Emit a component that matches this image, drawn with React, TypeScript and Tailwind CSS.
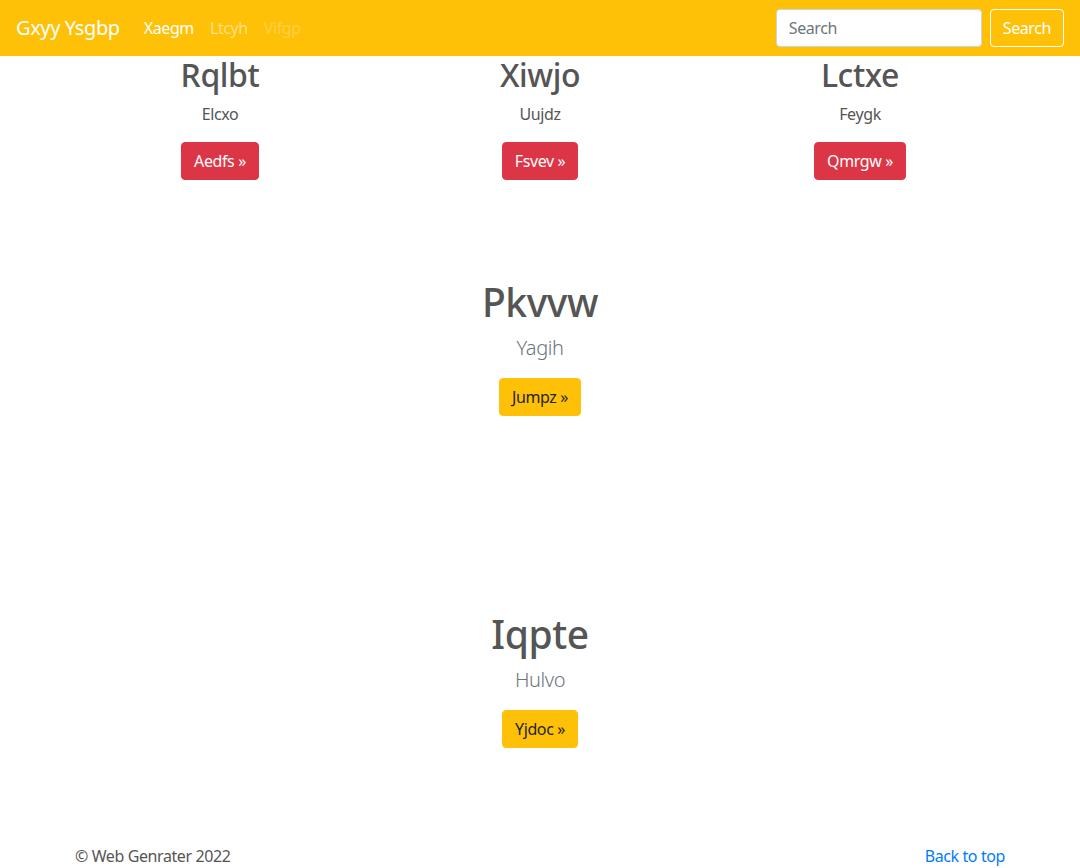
import { useState } from "react";

const font = { fontFamily: '"Noto Sans", "Open Sans", Arial, sans-serif' };

const columns = [
  { title: "Rqlbt", text: "Elcxo", btn: "Aedfs" },
  { title: "Xiwjo", text: "Uujdz", btn: "Fsvev" },
  { title: "Lctxe", text: "Feygk", btn: "Qmrgw" },
];

function Hero({ title, lead, btn, className }: { title: string; lead: string; btn: string; className: string }) {
  return (
    <section className={`text-center ${className}`}>
      <h1 className="text-[39px] leading-[47px] font-medium text-[#555] mb-2">{title}</h1>
      <p className="text-[20px] leading-[30px] font-light text-[#6c757d] mb-[15px]">{lead}</p>
      <a
        href="#"
        className="inline-block px-3 py-1.5 text-base leading-6 border border-[#ffc107] bg-[#ffc107] text-[#212529] rounded"
      >
        {btn} »
      </a>
    </section>
  );
}

export default function App() {
  const [query, setQuery] = useState("");

  return (
    <div className="min-h-[868px] bg-white text-[#555] tracking-[-0.025em]" style={font}>
      {/* navbar */}
      <nav className="h-14 bg-[#ffc107] flex items-center justify-between px-4">
        <div className="flex items-center">
          <a href="#" className="text-white text-xl leading-[30px] mr-4">
            Gxyy Ysgbp
          </a>
          <ul className="flex items-center text-base">
            <li>
              <a href="#" className="block px-2 py-2 text-white">Xaegm</a>
            </li>
            <li>
              <a href="#" className="block px-2 py-2 text-white/50">Ltcyh</a>
            </li>
            <li>
              <a href="#" className="block px-2 py-2 text-white/25">Vifgp</a>
            </li>
          </ul>
        </div>
        <form className="flex items-center" onSubmit={(e) => e.preventDefault()}>
          <input
            value={query}
            onChange={(e) => setQuery(e.target.value)}
            placeholder="Search"
            className="w-[206px] h-[38px] px-3 bg-white border border-[#ced4da] rounded text-base text-[#495057] placeholder:text-[#6c757d] outline-none"
          />
          <button className="ml-2 h-[38px] px-3 border border-white rounded text-white text-base">
            Search
          </button>
        </form>
      </nav>

      <main className="max-w-[960px] mx-auto px-[15px]">
        {/* three columns */}
        <div className="grid grid-cols-3 -mx-[15px]">
          {columns.map((c) => (
            <div key={c.title} className="px-[15px] text-center">
              <h2 className="text-[32px] leading-[38px] font-medium text-[#555] mb-2">{c.title}</h2>
              <p className="text-base leading-6 mb-4">{c.text}</p>
              <a
                href="#"
                className="inline-block px-3 py-1.5 text-base leading-6 border border-[#dc3545] bg-[#dc3545] text-white rounded"
              >
                {c.btn} »
              </a>
            </div>
          ))}
        </div>

        <Hero title="Pkvvw" lead="Yagih" btn="Jumpz" className="mt-[98px]" />
        <Hero title="Iqpte" lead="Hulvo" btn="Yjdoc" className="mt-[194px]" />

        <footer className="mt-[96px] flex justify-between text-base leading-6">
          <p>© Web Genrater 2022</p>
          <a href="#" className="text-[#007bff]">Back to top</a>
        </footer>
      </main>
    </div>
  );
}
